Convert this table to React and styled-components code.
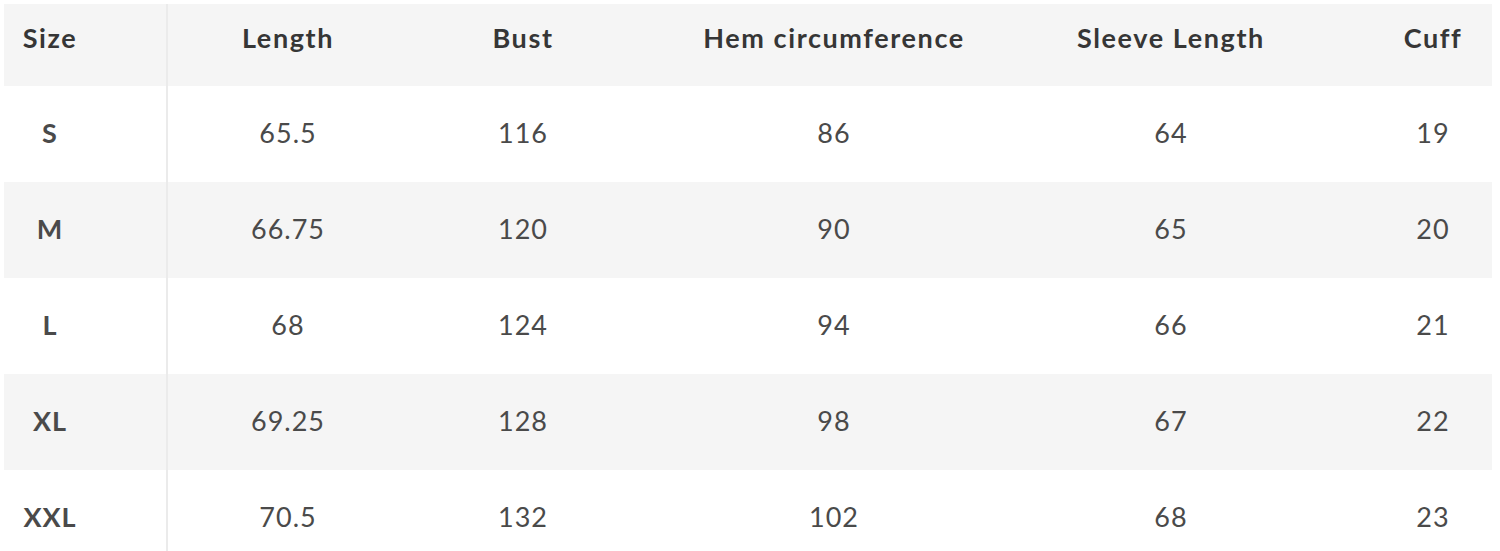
import React from "react";
import styled, { createGlobalStyle } from "styled-components";

const GlobalStyle = createGlobalStyle`
  html, body {
    margin: 0;
    padding: 0;
    background: #ffffff;
    overflow: hidden;
  }
`;

const Table = styled.div`
  font-family: Lato, "Noto Sans", sans-serif;
  font-size: 27px;
  padding: 4px 8px 0 4px;
  display: grid;
  grid-template-columns: 164px 240px 230px 392px 282px 180px;
`;

const Row = styled.div`
  display: contents;
`;

const Cell = styled.div`
  height: ${(p) => (p.$head ? "82px" : "96px")};
  box-sizing: border-box;
  display: flex;
  align-items: center;
  justify-content: center;
  padding-bottom: ${(p) => (p.$head ? "16px" : "4px")};
  padding-left: ${(p) => (p.$shift > 0 ? `${p.$shift}px` : "0")};
  padding-right: ${(p) => (p.$shift < 0 ? `${-p.$shift}px` : "0")};
  background: ${(p) => (p.$shade ? "#f5f5f5" : "#ffffff")};
  color: ${(p) => (p.$head ? "#363636" : "#4a4a4a")};
  font-weight: ${(p) => (p.$head || p.$first ? 700 : 400)};
  letter-spacing: ${(p) => (p.$head ? "1.6px" : "1px")};
  border-right: ${(p) => (p.$first ? "2px solid #ebebeb" : "none")};
  white-space: nowrap;
`;

// horizontal nudge of the text inside each column
const shifts = [-70, 0, 0, 0, 0, 62];

const headers = ["Size", "Length", "Bust", "Hem circumference", "Sleeve Length", "Cuff"];

const rows = [
  ["S", "65.5", "116", "86", "64", "19"],
  ["M", "66.75", "120", "90", "65", "20"],
  ["L", "68", "124", "94", "66", "21"],
  ["XL", "69.25", "128", "98", "67", "22"],
  ["XXL", "70.5", "132", "102", "68", "23"],
];

export default function App() {
  return (
    <>
      <GlobalStyle />
      <Table>
        <Row>
          {headers.map((h, i) => (
            <Cell key={h} $head $shade $first={i === 0} $shift={shifts[i]}>
              {h}
            </Cell>
          ))}
        </Row>
        {rows.map((r, ri) => (
          <Row key={r[0]}>
            {r.map((v, i) => (
              <Cell key={i} $shade={ri % 2 === 1} $first={i === 0} $shift={shifts[i]}>
                {v}
              </Cell>
            ))}
          </Row>
        ))}
      </Table>
    </>
  );
}
